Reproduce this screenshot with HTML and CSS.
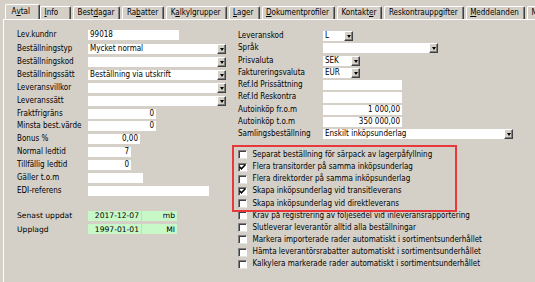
FILE: index.html
```html
<!DOCTYPE html>
<html lang="sv">
<head>
<meta charset="utf-8">
<title>Avtal</title>
<link rel="stylesheet" href="styles.css">
</head>
<body>
<div class="tabs">
  <div class="tab active">A<u>v</u>tal</div>
  <div class="tab"><u>I</u>nfo</div>
  <div class="tab">Best<u>d</u>agar</div>
  <div class="tab">Ra<u>b</u>atter</div>
  <div class="tab">K<u>a</u>lkylgrupper</div>
  <div class="tab"><u>L</u>ager</div>
  <div class="tab"><u>D</u>okumentprofiler</div>
  <div class="tab">Kontakt<u>e</u>r</div>
  <div class="tab">Reskontrauppgifter</div>
  <div class="tab"><u>M</u>eddelanden</div>
  <div class="tab">M</div>
</div>
<div class="panel">
  <div class="col-left">
    <div class="lrow first"><span class="label">Lev.kundnr</span><div class="field w91">99018</div></div>
    <div class="lrow"><span class="label">Beställningstyp</span><div class="field combo w138"><span class="val">Mycket normal</span><span class="btn"></span></div></div>
    <div class="lrow"><span class="label">Beställningskod</span><div class="field combo w138"><span class="val"></span><span class="btn"></span></div></div>
    <div class="lrow"><span class="label">Beställningssätt</span><div class="field combo w138"><span class="val">Beställning via utskrift</span><span class="btn"></span></div></div>
    <div class="lrow"><span class="label">Leveransvillkor</span><div class="field combo w138"><span class="val"></span><span class="btn"></span></div></div>
    <div class="lrow"><span class="label">Leveranssätt</span><div class="field combo w138"><span class="val"></span><span class="btn"></span></div></div>
    <div class="lrow"><span class="label">Fraktfrigräns</span><div class="field num w68">0</div></div>
    <div class="lrow"><span class="label">Minsta best.värde</span><div class="field num w68">0</div></div>
    <div class="lrow"><span class="label">Bonus %</span><div class="field num w52">0,00</div></div>
    <div class="lrow"><span class="label">Normal ledtid</span><div class="field num w43">7</div></div>
    <div class="lrow"><span class="label">Tillfällig ledtid</span><div class="field num w43">0</div></div>
    <div class="lrow"><span class="label">Gäller t.o.m</span><div class="field w55"></div></div>
    <div class="lrow"><span class="label">EDI-referens</span><div class="field w121"></div></div>

    <div class="meta">
      <div class="mrow"><span class="mlabel">Senast uppdat</span><span class="ro w53">2017-12-07</span><span class="ro w35">mb</span></div>
      <div class="mrow"><span class="mlabel">Upplagd</span><span class="ro w53">1997-01-01</span><span class="ro w35">MI</span></div>
    </div>
  </div>

  <div class="col-right">
    <div class="rrow"><span class="rlabel">Leveranskod</span><div class="field combo w30"><span class="val">L</span><span class="btn"></span></div></div>
    <div class="rrow"><span class="rlabel">Språk</span><div class="field combo w115"><span class="val"></span><span class="btn"></span></div></div>
    <div class="rrow"><span class="rlabel">Prisvaluta</span><div class="field combo w37"><span class="val">SEK</span><span class="btn"></span></div></div>
    <div class="rrow"><span class="rlabel">Faktureringsvaluta</span><div class="field combo w37"><span class="val">EUR</span><span class="btn"></span></div></div>
    <div class="rrow"><span class="rlabel">Ref.Id Prissättning</span><div class="field tall w79"></div></div>
    <div class="rrow"><span class="rlabel">Ref.Id Reskontra</span><div class="field tall w79"></div></div>
    <div class="rrow"><span class="rlabel">Autoinköp fr.o.m</span><div class="field tall num w79">1 000,00</div></div>
    <div class="rrow"><span class="rlabel">Autoinköp t.o.m</span><div class="field tall num w79">350 000,00</div></div>
    <div class="rrow"><span class="rlabel">Samlingsbeställning</span><div class="field combo w190"><span class="val">Enskilt inköpsunderlag</span><span class="btn"></span></div></div>

    <div class="checks">
      <div class="highlight"></div>
      <div class="check"><span class="box"></span>Separat beställning för särpack av lagerpåfyllning</div>
      <div class="check"><span class="box"><svg viewBox="0 0 9 9" width="9" height="9"><path d="M1.5 3.8 L3.4 5.8 L7.3 1.8" fill="none" stroke="#000" stroke-width="1.5"/></svg></span>Flera transitorder på samma inköpsunderlag</div>
      <div class="check"><span class="box"></span>Flera direktorder på samma inköpsunderlag</div>
      <div class="check"><span class="box"><svg viewBox="0 0 9 9" width="9" height="9"><path d="M1.5 3.8 L3.4 5.8 L7.3 1.8" fill="none" stroke="#000" stroke-width="1.5"/></svg></span>Skapa inköpsunderlag vid transitleverans</div>
      <div class="check"><span class="box"></span>Skapa inköpsunderlag vid direktleverans</div>
      <div class="check"><span class="box"></span>Krav på registrering av följesedel vid inleveransrapportering</div>
      <div class="check"><span class="box"></span>Slutleverar leverantör alltid alla beställningar</div>
      <div class="check"><span class="box"></span>Markera importerade rader automatiskt i sortimentsunderhållet</div>
      <div class="check"><span class="box"></span>Hämta leverantörsrabatter automatiskt i sortimentsunderhållet</div>
      <div class="check"><span class="box"></span>Kalkylera markerade rader automatiskt i sortimentsunderhållet</div>
    </div>
  </div>
</div>
</body>
</html>
```

FILE: styles.css
```css
* { box-sizing: border-box; }
html, body { margin: 0; padding: 0; }
body {
  width: 535px;
  height: 282px;
  overflow: hidden;
  background: #d4d0c8;
  color: #000;
  font-family: "DejaVu Sans Condensed", "Liberation Sans", sans-serif;
  font-size: 8px;
  line-height: 1;
}
u { text-decoration: underline; text-underline-offset: 1px; text-decoration-thickness: 1px; }

/* tab strip */
.tabs {
  display: flex;
  align-items: flex-end;
  gap: 2px;
  height: 19px;
  padding-left: 7px;
  white-space: nowrap;
  overflow: hidden;
}
.tab {
  position: relative;
  display: flex;
  align-items: center;
  flex: none;
  height: 13px;
  min-width: 31px;
  padding: 0 5px 0 3.5px;
  border-top: 1px solid #fff;
  border-left: 1px solid #fff;
  border-right: 1px solid #404040;
  border-radius: 2px 2px 0 0;
  box-shadow: inset -1px 0 #808080;
}
.tab.active {
  height: 16px;
  min-width: 35px;
  margin: 0 -2px -1px;
  padding: 0 4px 2px 5.5px;
  background: #d4d0c8;
  z-index: 1;
}

/* panel */
.panel {
  display: grid;
  grid-template-columns: 228px 1fr;
  height: 263px;
  margin-left: 3px;
  border-top: 1px solid #fff;
  border-left: 1px solid #fff;
}
.col-left { padding: 8.1px 0 0 13px; }
.col-right { padding-top: 9.85px; }

.lrow, .rrow { display: flex; align-items: center; white-space: nowrap; }
.lrow { height: 12.85px; }
.lrow.first { margin-bottom: 2px; }
.rrow { height: 12.3px; padding-left: 6px; }
.label { width: 71px; flex: none; }
.rlabel { width: 85px; flex: none; }

.field {
  flex: none;
  display: flex;
  align-items: center;
  height: 10px;
  padding: 0 2px;
  background: #fff;
  line-height: 10px;
  overflow: hidden;
}
.field.tall { height: 10.5px; }
.field.num { justify-content: flex-end; }
.field.combo { padding-right: 0; }
.combo .val { flex: 1; min-width: 0; line-height: 10px; }
.btn {
  flex: none;
  position: relative;
  width: 9px;
  height: 100%;
  background: #d4d0c8;
  border-top: 1px solid #fff;
  border-left: 1px solid #fff;
  border-right: 1px solid #404040;
  border-bottom: 1px solid #404040;
  box-shadow: inset -1px -1px #808080;
}
.btn::after {
  content: "";
  position: absolute;
  left: 1.5px;
  top: 3px;
  border-top: 3px solid #000;
  border-left: 2px solid transparent;
  border-right: 2px solid transparent;
}

.w30 { width: 30px; }
.w37 { width: 37px; }
.w43 { width: 43px; }
.w52 { width: 52px; }
.w55 { width: 55px; }
.w68 { width: 68px; }
.w79 { width: 79px; }
.w91 { width: 91px; }
.w115 { width: 115px; }
.w121 { width: 121px; }
.w138 { width: 138px; }
.w190 { width: 190px; }

/* meta */
.meta { margin-top: 12.1px; font-family: "DejaVu Sans", "Liberation Sans", sans-serif; font-size: 7.6px; }
.mrow { display: flex; align-items: center; gap: 1px; height: 13.5px; }
.mlabel { width: 70px; flex: none; }
.ro {
  display: flex;
  align-items: center;
  justify-content: flex-end;
  height: 10px;
  padding-right: 2px;
  background: #c8f8c8;
}
.w53 { width: 53px; }
.w35 { width: 35px; }

/* checkboxes */
.checks { position: relative; margin-top: 8.4px; }
.check {
  display: flex;
  align-items: center;
  height: 12.15px;
  padding-left: 6px;
  white-space: nowrap;
}
.box {
  flex: none;
  width: 9px;
  height: 9px;
  margin-right: 5.5px;
  background: #fff;
  border-top: 1px solid #808080;
  border-left: 1px solid #808080;
  border-right: 1px solid #fff;
  border-bottom: 1px solid #e4e2dc;
  box-shadow: inset 1px 1px #404040;
  overflow: hidden;
}
.box svg { display: block; margin: -1px 0 0 -1px; }
.highlight {
  position: absolute;
  left: 0;
  top: -4px;
  width: 225px;
  height: 67px;
  border: 2px solid #e8383c;
  pointer-events: none;
  z-index: 1;
}
```
